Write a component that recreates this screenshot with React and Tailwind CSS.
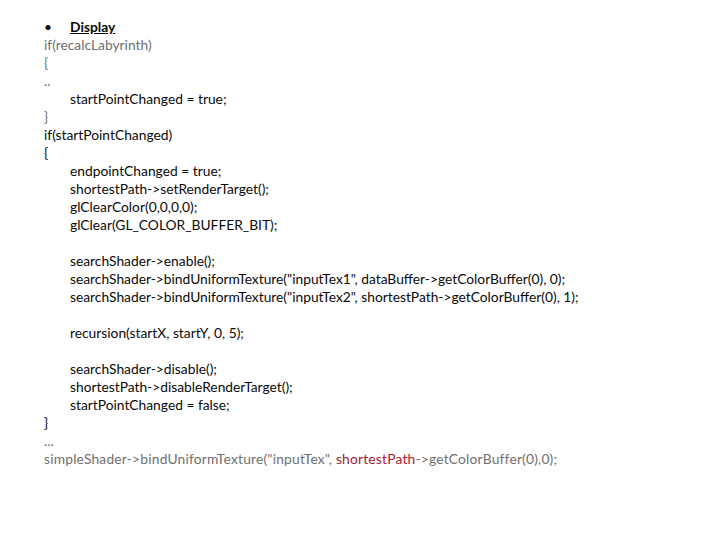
const lines = [
  { t: "if(recalcLabyrinth)", grey: true },
  { t: "{", grey: true },
  { t: "..", grey: true },
  { t: "startPointChanged = true;", indent: true },
  { t: "}", grey: true },
  { t: "if(startPointChanged)" },
  { t: "{" },
  { t: "endpointChanged = true;", indent: true },
  { t: "shortestPath->setRenderTarget();", indent: true },
  { t: "glClearColor(0,0,0,0);", indent: true },
  { t: "glClear(GL_COLOR_BUFFER_BIT);", indent: true },
  { t: "" },
  { t: "searchShader->enable();", indent: true },
  { t: 'searchShader->bindUniformTexture("inputTex1", dataBuffer->getColorBuffer(0), 0);', indent: true },
  { t: 'searchShader->bindUniformTexture("inputTex2", shortestPath->getColorBuffer(0), 1);', indent: true },
  { t: "" },
  { t: "recursion(startX, startY, 0, 5);", indent: true },
  { t: "" },
  { t: "searchShader->disable();", indent: true },
  { t: "shortestPath->disableRenderTarget();", indent: true },
  { t: "startPointChanged = false;", indent: true },
  { t: "}" },
  { t: "...", grey: true },
];

export default function App() {
  return (
    <div className="h-[540px] w-[720px] bg-white pl-[44px] pt-[18px] text-[13.8px] leading-[18px] text-[#0a0a0a] [font-family:Lato,'Open_Sans',sans-serif]">
      <div className="flex h-[18px]">
        <span className="w-[26px]">•</span>
        <span className="font-bold underline">Display</span>
      </div>
      {lines.map((l, i) => (
        <div
          key={i}
          className={`h-[18px] whitespace-pre ${l.indent ? "pl-[26px]" : ""} ${l.grey ? "text-[#6f6f6f]" : ""}`}
        >
          {l.t}
        </div>
      ))}
      <div className="h-[18px] whitespace-pre text-[#6f6f6f] tracking-[0.2px]">
        simpleShader-&gt;bindUniformTexture("inputTex", <span className="text-[#a3202c]">shortestPath</span>-&gt;getColorBuffer(0),0);
      </div>
    </div>
  );
}
